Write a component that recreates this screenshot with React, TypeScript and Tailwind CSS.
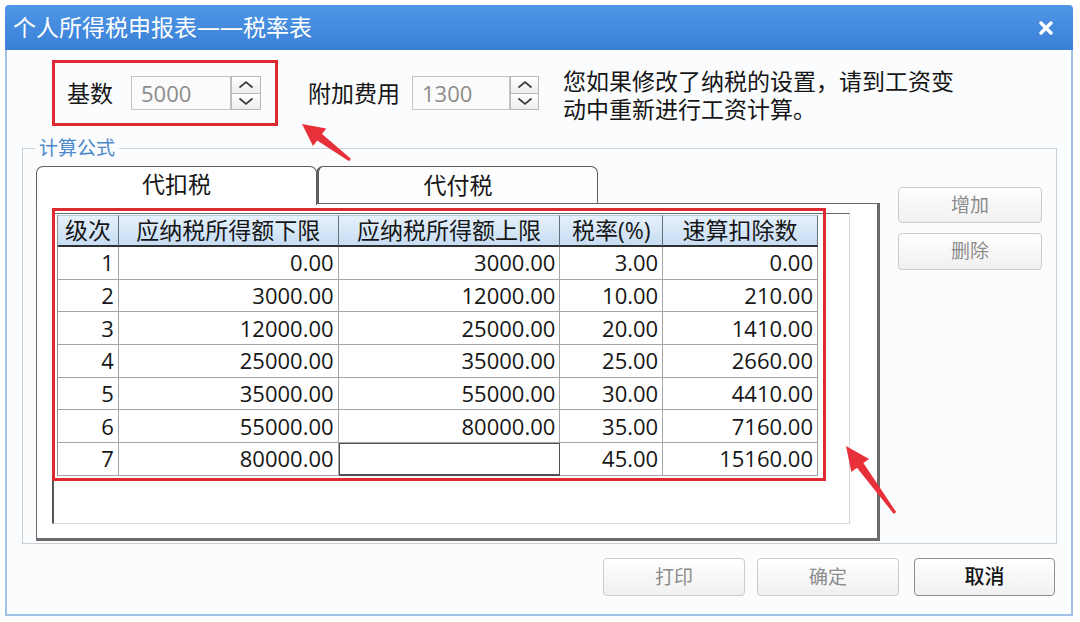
import React from 'react'

const rows = [
  ['1', '0.00', '3000.00', '3.00', '0.00'],
  ['2', '3000.00', '12000.00', '10.00', '210.00'],
  ['3', '12000.00', '25000.00', '20.00', '1410.00'],
  ['4', '25000.00', '35000.00', '25.00', '2660.00'],
  ['5', '35000.00', '55000.00', '30.00', '4410.00'],
  ['6', '55000.00', '80000.00', '35.00', '7160.00'],
  ['7', '80000.00', '', '45.00', '15160.00'],
]

const headers = ['级次', '应纳税所得额下限', '应纳税所得额上限', '税率(%)', '速算扣除数']
const colW = ['w-[61px]', 'w-[220px]', 'w-[222px]', 'w-[103px]', 'w-[155px]']

function Spin({ w }: { w: string }) {
  return (
    <div className={`flex flex-col h-[34px] ${w}`}>
      <div className="flex-1 flex items-center justify-center border border-[#b8b8b8] bg-linear-to-b from-white to-[#ededed]">
        <svg width="16" height="9" viewBox="0 0 16 9">
          <polyline points="1.5,7.5 8,2 14.5,7.5" fill="none" stroke="#3a3a3a" strokeWidth="1.7" />
        </svg>
      </div>
      <div className="flex-1 flex items-center justify-center border border-t-0 border-[#b8b8b8] bg-linear-to-b from-white to-[#ededed]">
        <svg width="16" height="9" viewBox="0 0 16 9">
          <polyline points="1.5,1.5 8,7 14.5,1.5" fill="none" stroke="#3a3a3a" strokeWidth="1.7" />
        </svg>
      </div>
    </div>
  )
}

function Btn({ label, w, h, primary }: { label: string; w: string; h: string; primary?: boolean }) {
  return (
    <button
      type="button"
      className={`${w} ${h} flex items-center justify-center rounded-[4px] border bg-linear-to-b from-white to-[#f0f0f0] ${
        primary ? 'border-[#8e8e8e] text-[#151515] text-[20px] font-medium' : 'border-[#cbcbcb] text-[#8c8c8c] text-[19px]'
      }`}
    >
      {label}
    </button>
  )
}

export default function App() {
  return (
    <div className="relative w-[1080px] h-[622px] overflow-hidden bg-white text-[#161616] font-['Open_Sans','Noto_Sans_CJK_SC',sans-serif]">
      <div className="ml-[5px] mt-[5px] w-[1068px] h-[611px] flex flex-col">
        {/* title bar */}
        <div className="h-[45px] shrink-0 rounded-t-[4px] bg-linear-to-b from-[#4f97e7] to-[#3a7fd6] flex items-center justify-between pl-[8px] pr-[20px] text-white text-[23px]">
          <span>个人所得税申报表——税率表</span>
          <svg width="14" height="14" viewBox="0 0 14 14">
            <path d="M2 2 L12 12 M12 2 L2 12" stroke="white" strokeWidth="3.4" strokeLinecap="round" />
          </svg>
        </div>

        <div className="flex-1 flex flex-col bg-[#fbfcfe] border-x-2 border-b-2 border-[#9fc1e7]">
          {/* top row */}
          <div className="flex items-center mt-[10px] ml-[45px] h-[66px]">
            <div className="flex items-center w-[226px] h-[66px] border-[3px] border-[#dc2a30] pl-[12px]">
              <span className="w-[47px] text-[23px]">基数</span>
              <div className="ml-[17px] flex items-center">
                <div className="w-[100px] h-[34px] border border-[#c4c4c4] bg-[#fbfbfb] pl-[9px] flex items-center text-[22px] text-[#8c8c8c]">
                  5000
                </div>
                <Spin w="w-[30px]" />
              </div>
            </div>
            <span className="ml-[30px] text-[23px]">附加费用</span>
            <div className="ml-[12px] flex items-center">
              <div className="w-[98px] h-[34px] border border-[#c4c4c4] bg-[#fbfbfb] pl-[9px] flex items-center text-[22px] text-[#8c8c8c]">
                1300
              </div>
              <Spin w="w-[29px]" />
            </div>
            <div className="ml-[24px] mt-[4px] flex flex-col whitespace-nowrap text-[23px] leading-[28px]">
              <span>您如果修改了纳税的设置，请到工资变</span>
              <span>动中重新进行工资计算。</span>
            </div>
          </div>

          {/* group box */}
          <fieldset className="mt-[12px] ml-[15px] w-[1035px] border border-[#c8ced6] pl-[13px] pb-[2px]">
            <legend className="-ml-px px-[4px] text-[19px] leading-[20px] text-[#4d88c9]">计算公式</legend>
            <div className="flex mt-[8px]">
              <div className="w-[844px] flex flex-col">
                <div className="flex items-end h-[37px]">
                  <div className="relative z-10 w-[281px] h-[39px] -mb-[2px] bg-white border border-b-0 border-[#5e5e5e] rounded-t-[7px] flex items-center justify-center text-[23px] pb-[3px]">
                    代扣税
                  </div>
                  <div className="w-[282px] h-[37px] -ml-px bg-[#fdfdfd] border border-b-0 border-l-[3px] border-[#5e5e5e] rounded-t-[7px] flex items-center justify-center text-[23px]">
                    代付税
                  </div>
                </div>
                <div className="w-[844px] h-[338px] bg-white border border-[#6a6a6a] border-r-[3px] border-b-[3px] pl-[15px] pt-[9px]">
                  <div className="w-[798px] h-[311px] bg-white border border-l-2 border-l-[#555] border-t-[#6a6a6a] border-r-[#d6d6d6] border-b-[#dcdcdc] pl-[3px] pt-px">
                    <div className="relative w-[761px]">
                      <div className="border-l border-[#8f8f8f]">
                        <div className="flex">
                          {headers.map((h, i) => (
                            <div
                              key={h}
                              className={`${colW[i]} h-[32px] flex items-center justify-center border-t border-t-[#b9c9da] border-r border-r-[#66717e] border-b-2 border-b-[#2e2e2e] bg-linear-to-b from-[#e6f1fb] to-[#c7ddf3] text-[23px]`}
                            >
                              {h}
                            </div>
                          ))}
                        </div>
                        {rows.map((r) => (
                          <div key={r[0]} className="flex">
                            {r.map((c, i) => (
                              <div
                                key={i}
                                className={`${colW[i]} h-[32.7px] flex items-center justify-end pr-[4px] text-[22px] bg-white ${
                                  r[0] === '7' && i === 2
                                    ? 'border border-b-2 border-[#505050]'
                                    : 'border-r border-b border-[#a5a5a5]'
                                }`}
                              >
                                {c}
                              </div>
                            ))}
                          </div>
                        ))}
                      </div>
                      <div className="absolute -left-[5px] -top-[7px] -right-[8px] -bottom-[5px] border-[3px] border-[#dc2a30] pointer-events-none" />
                    </div>
                  </div>
                </div>
              </div>
              <div className="ml-[18px] mt-[21px] flex flex-col gap-[10px]">
                <Btn label="增加" w="w-[144px]" h="h-[36px]" />
                <Btn label="删除" w="w-[144px]" h="h-[37px]" />
              </div>
            </div>
          </fieldset>

          {/* bottom buttons */}
          <div className="flex justify-end mt-[14px] pr-[16px]">
            <Btn label="打印" w="w-[142px]" h="h-[38px]" />
            <div className="ml-[12px]">
              <Btn label="确定" w="w-[142px]" h="h-[38px]" />
            </div>
            <div className="ml-[15px]">
              <Btn label="取消" w="w-[141px]" h="h-[38px]" primary />
            </div>
          </div>
        </div>
      </div>

      {/* annotation arrows */}
      <svg className="absolute inset-0 pointer-events-none" width="1080" height="622" viewBox="0 0 1080 622">
        <polygon
          points="302,124 326.2,128.4 322,134 350.9,158.8 349.1,161.2 317.2,140.4 313,146"
          fill="#e8303a"
        />
        <polygon
          points="846,446 869.1,458.9 863.4,463 896.2,512.1 893.8,513.9 857,467.8 851.3,471.9"
          fill="#e8303a"
        />
      </svg>
    </div>
  )
}
